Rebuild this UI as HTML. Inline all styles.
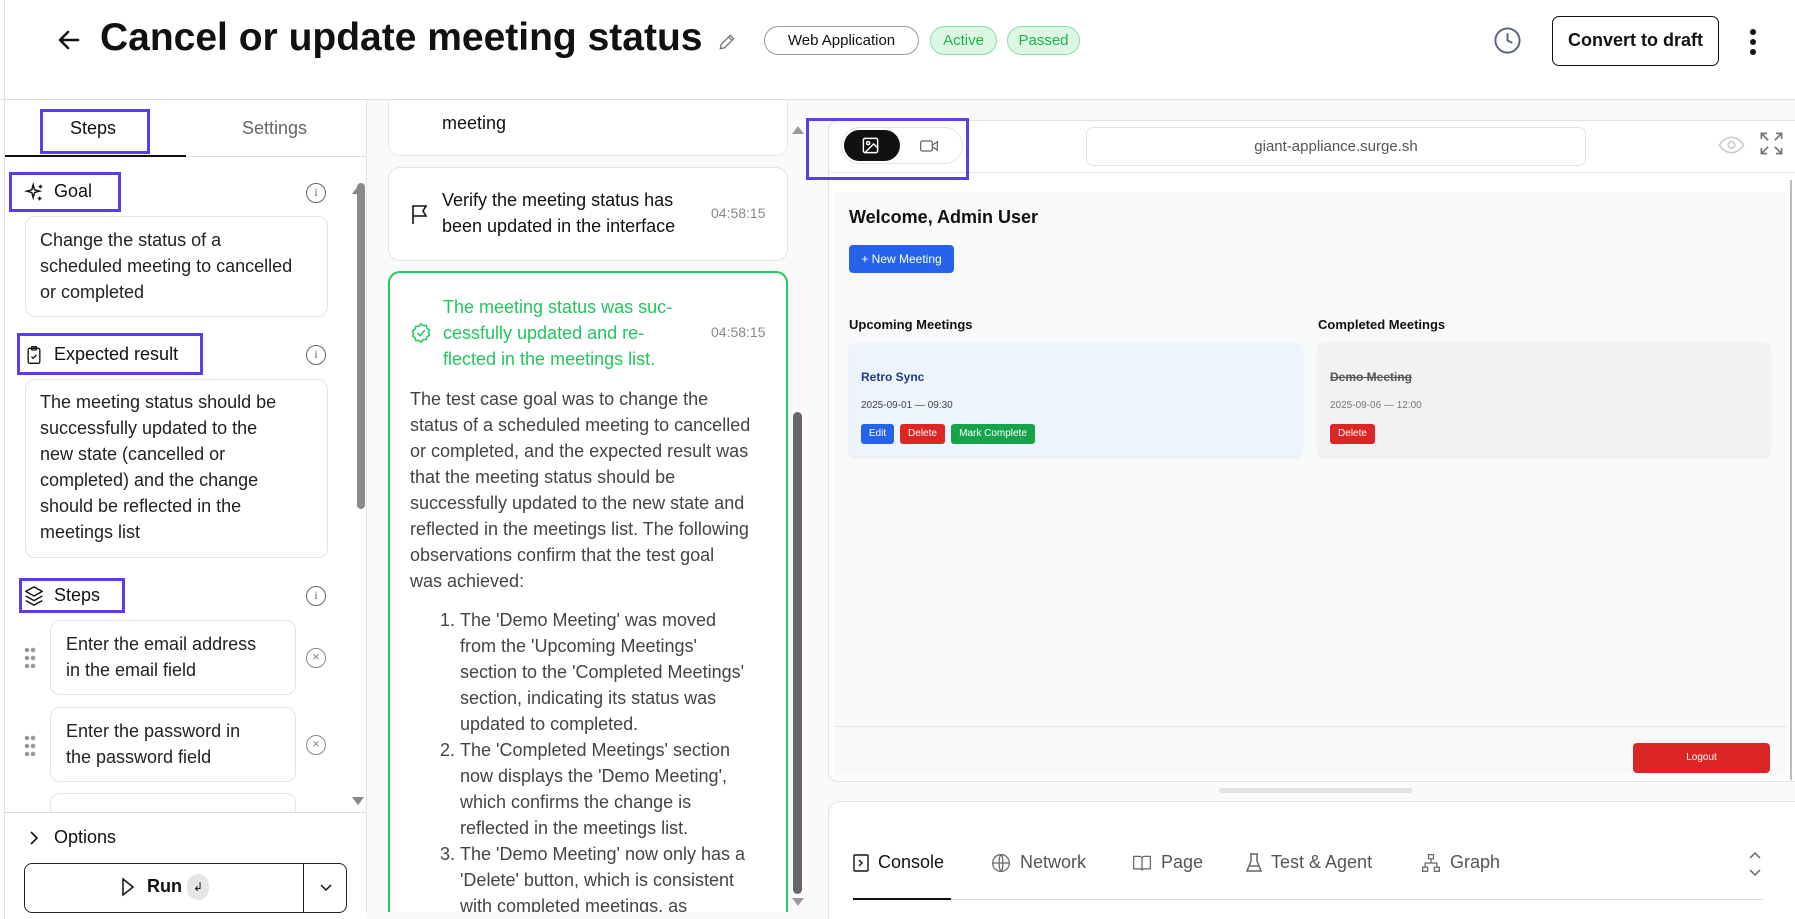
<!DOCTYPE html>
<html><head><meta charset="utf-8"><style>
*{box-sizing:border-box;margin:0;padding:0}
body{width:1795px;height:919px;overflow:hidden;background:#fff;font-family:"Liberation Sans",sans-serif;color:#111;position:relative}
.a{position:absolute}
.hl{position:absolute;border:3px solid #5b3fe6}
.card{position:absolute;background:#fff;border:1px solid #e5e5e5;border-radius:10px}
.t18{font-size:18px;line-height:26px;color:#222}
.chip{position:absolute;height:29px;border-radius:15px;font-size:15px;line-height:27px;text-align:center}
.info{position:absolute;width:20px;height:20px;border:1.5px solid #666;border-radius:50%;font-size:12px;line-height:17px;text-align:center;color:#666;font-family:"Liberation Serif",serif}
.xc{position:absolute;width:20px;height:20px;border:1.5px solid #888;border-radius:50%;font-size:13px;line-height:16px;text-align:center;color:#888}
.dots{position:absolute;width:12px;height:22px;background-image:radial-gradient(circle,#999 2px,transparent 2.5px);background-size:6px 8px}
.btn{position:absolute;color:#fff;font-size:10px;line-height:20px;text-align:center;border-radius:3px}
.tab{position:absolute;top:852px;font-size:18px;color:#555;display:flex;align-items:center;gap:9px}
</style></head><body>
<div class="a" style="left:4px;top:0;width:1px;height:919px;background:#e3e3e3"></div>
<!-- header -->
<svg class="a" style="left:57px;top:28px" width="24" height="24" viewBox="0 0 24 24" fill="none" stroke="#111" stroke-width="2.6" stroke-linecap="round" stroke-linejoin="round"><path d="M21 12H4M11 4l-8 8 8 8"/></svg>
<div class="a" style="left:100px;top:16px;font-size:39px;font-weight:bold;white-space:nowrap">Cancel or update meeting status</div>
<svg class="a" style="left:717px;top:32px" width="20" height="20" viewBox="0 0 24 24" fill="none" stroke="#777" stroke-width="1.6"><path d="M4 20l1-5L16 4l4 4L9 19zM14 6l4 4"/></svg>
<div class="chip" style="left:764px;top:26px;width:155px;border:1.5px solid #999;color:#111">Web Application</div>
<div class="chip" style="left:930px;top:26px;width:67px;border:1px solid #86e0a3;background:#dcf8e5;color:#22b04b">Active</div>
<div class="chip" style="left:1007px;top:26px;width:73px;border:1px solid #86e0a3;background:#dcf8e5;color:#22b04b">Passed</div>
<svg class="a" style="left:1493px;top:26px" width="29" height="29" viewBox="0 0 24 24" fill="none" stroke="#5a6478" stroke-width="1.6"><circle cx="12" cy="12" r="10"/><path d="M12 6v6l4 2"/></svg>
<div class="a" style="left:1552px;top:16px;width:167px;height:50px;border:1.5px solid #111;border-radius:7px;font-size:18px;font-weight:bold;line-height:47px;text-align:center">Convert to draft</div>
<div class="a" style="left:1750px;top:29px;width:6px;height:6px;border-radius:3px;background:#111;box-shadow:0 10px 0 #111,0 20px 0 #111"></div>
<div class="a" style="left:0;top:99px;width:1795px;height:1px;background:#ddd"></div>
<!-- left panel -->
<div class="a" style="left:366px;top:100px;width:1px;height:819px;background:#e5e5e5"></div>
<div class="a" style="left:70px;top:118px;font-size:18px">Steps</div>
<div class="a" style="left:242px;top:118px;font-size:18px;color:#666">Settings</div>
<div class="a" style="left:5px;top:156px;width:361px;height:1px;background:#ddd"></div>
<div class="a" style="left:5px;top:155px;width:181px;height:2px;background:#111"></div>
<div class="hl" style="left:40px;top:109px;width:110px;height:45px"></div>
<div class="a" style="left:357px;top:183px;width:8px;height:326px;background:#8a8a8a;border-radius:4px"></div>
<div class="a" style="left:352px;top:186px;border:6px solid transparent;border-bottom:8px solid #888;border-top:0"></div>
<div class="a" style="left:352px;top:797px;border:6px solid transparent;border-top:8px solid #888;border-bottom:0"></div>
<svg class="a" style="left:24px;top:182px" width="22" height="22" viewBox="0 0 24 24" fill="none" stroke="#111" stroke-width="1.6"><path d="M10 3l1.5 5.5L17 10l-5.5 1.5L10 17l-1.5-5.5L3 10l5.5-1.5zM18 3v4M16 5h4M17 16v4M15 18h4"/></svg>
<div class="a" style="left:54px;top:181px;font-size:18px">Goal</div>
<div class="hl" style="left:9px;top:172px;width:112px;height:40px"></div>
<div class="info" style="left:306px;top:183px">i</div>
<div class="card" style="left:25px;top:216px;width:303px;height:101px"></div>
<div class="a t18" style="left:40px;top:227px">Change the status of a<br>scheduled meeting to cancelled<br>or completed</div>
<svg class="a" style="left:24px;top:344px" width="20" height="22" viewBox="0 0 24 24" fill="none" stroke="#111" stroke-width="1.6"><rect x="5" y="4" width="14" height="18" rx="2"/><rect x="9" y="2" width="6" height="4" rx="1"/><path d="M9 14l2 2 4-4"/></svg>
<div class="a" style="left:54px;top:344px;font-size:18px">Expected result</div>
<div class="hl" style="left:17px;top:333px;width:186px;height:42px"></div>
<div class="info" style="left:306px;top:345px">i</div>
<div class="card" style="left:25px;top:379px;width:303px;height:179px"></div>
<div class="a t18" style="left:40px;top:389px">The meeting status should be<br>successfully updated to the<br>new state (cancelled or<br>completed) and the change<br>should be reflected in the<br>meetings list</div>
<svg class="a" style="left:23px;top:585px" width="22" height="22" viewBox="0 0 24 24" fill="none" stroke="#111" stroke-width="1.6" stroke-linejoin="round"><path d="M12 2l9 5-9 5-9-5zM3 12l9 5 9-5M3 17l9 5 9-5"/></svg>
<div class="a" style="left:54px;top:585px;font-size:18px">Steps</div>
<div class="hl" style="left:19px;top:578px;width:106px;height:35px"></div>
<div class="info" style="left:306px;top:586px">i</div>
<div class="dots" style="left:24px;top:646px"></div>
<div class="card" style="left:50px;top:620px;width:246px;height:75px"></div>
<div class="a t18" style="left:66px;top:631px">Enter the email address<br>in the email field</div>
<div class="xc" style="left:306px;top:648px">×</div>
<div class="dots" style="left:24px;top:734px"></div>
<div class="card" style="left:50px;top:707px;width:246px;height:75px"></div>
<div class="a t18" style="left:66px;top:718px">Enter the password in<br>the password field</div>
<div class="xc" style="left:306px;top:735px">×</div>
<div class="card" style="left:50px;top:793px;width:246px;height:19px;border-bottom:none;border-radius:10px 10px 0 0"></div>
<div class="a" style="left:5px;top:812px;width:361px;height:107px;background:#fff;border-top:1px solid #ddd"></div>
<svg class="a" style="left:28px;top:830px" width="12" height="16" viewBox="0 0 12 16" fill="none" stroke="#111" stroke-width="1.6"><path d="M3 2l6 6-6 6"/></svg>
<div class="a" style="left:54px;top:827px;font-size:18px">Options</div>
<div class="a" style="left:24px;top:863px;width:323px;height:50px;border:1.5px solid #222;border-radius:8px"></div>
<div class="a" style="left:303px;top:864px;width:1px;height:48px;background:#222"></div>
<svg class="a" style="left:319px;top:881px" width="14" height="14" viewBox="0 0 14 14" fill="none" stroke="#111" stroke-width="1.5"><path d="M2 4l5 5 5-5"/></svg>
<svg class="a" style="left:120px;top:877px" width="16" height="20" viewBox="0 0 16 20" fill="none" stroke="#111" stroke-width="1.5"><path d="M3 2l10 8-10 8z"/></svg>
<div class="a" style="left:147px;top:876px;font-size:18px;font-weight:bold">Run</div>
<div class="a" style="left:187px;top:874px;width:22px;height:26px;background:#e6e6e6;border-radius:11px;font-size:12px;text-align:center;line-height:26px">↲</div>
<!-- middle -->
<div class="a" style="left:367px;top:100px;width:461px;height:819px;background:#fafafa;overflow:hidden">
<div class="card" style="left:21px;top:-20px;width:400px;height:76px;border-radius:12px"></div>
<div class="a t18" style="left:75px;top:10px;color:#111">meeting</div>
<div class="card" style="left:21px;top:67px;width:400px;height:94px;border-radius:12px"></div>
<svg class="a" style="left:43px;top:103px" width="20" height="22" viewBox="0 0 20 22" fill="none" stroke="#111" stroke-width="1.6"><path d="M3 21V3h13l-3 5 3 5H3"/></svg>
<div class="a t18" style="left:75px;top:87px;color:#111">Verify the meeting status has<br>been updated in the interface</div>
<div class="a" style="left:344px;top:105px;font-size:14px;color:#888">04:58:15</div>
<div class="a" style="left:21px;top:171px;width:400px;height:700px;border:2px solid #22c55e;border-radius:12px;background:#fff"></div>
<svg class="a" style="left:43px;top:222px" width="22" height="22" viewBox="0 0 24 24" fill="none" stroke="#22c55e" stroke-width="1.6"><path d="M12 2l2.5 2 3.2-.3.8 3.1 2.8 1.7-1.2 3 1.2 3-2.8 1.7-.8 3.1-3.2-.3L12 22l-2.5-2-3.2.3-.8-3.1-2.8-1.7 1.2-3-1.2-3 2.8-1.7.8-3.1 3.2.3z"/><path d="M8 12l3 3 5-6"/></svg>
<div class="a t18" style="left:76px;top:194px;color:#22c55e">The meeting status was suc-<br>cessfully updated and re-<br>flected in the meetings list.</div>
<div class="a" style="left:344px;top:224px;font-size:14px;color:#888">04:58:15</div>
<div class="a t18" style="left:43px;top:286px;color:#444;white-space:nowrap">The test case goal was to change the<br>status of a scheduled meeting to cancelled<br>or completed, and the expected result was<br>that the meeting status should be<br>successfully updated to the new state and<br>reflected in the meetings list. The following<br>observations confirm that the test goal<br>was achieved:</div>
<ol class="a t18" style="left:93px;top:507px;color:#444;white-space:nowrap">
<li>The 'Demo Meeting' was moved<br>from the 'Upcoming Meetings'<br>section to the 'Completed Meetings'<br>section, indicating its status was<br>updated to completed.</li>
<li>The 'Completed Meetings' section<br>now displays the 'Demo Meeting',<br>which confirms the change is<br>reflected in the meetings list.</li>
<li>The 'Demo Meeting' now only has a<br>'Delete' button, which is consistent<br>with completed meetings, as</li></ol>
</div>
<div class="a" style="left:366px;top:912px;width:462px;height:7px;background:#fafafa"></div>
<div class="a" style="left:793px;top:412px;width:9px;height:482px;background:#666;border-radius:5px"></div>
<div class="a" style="left:792px;top:126px;border:6px solid transparent;border-bottom:8px solid #999;border-top:0"></div>
<div class="a" style="left:792px;top:898px;border:6px solid transparent;border-top:8px solid #999;border-bottom:0"></div>
<!-- right -->
<div class="a" style="left:806px;top:100px;width:989px;height:819px;background:#fafafa;overflow:hidden">
<div class="a" style="left:22px;top:20px;width:980px;height:662px;background:#fff;border:1px solid #e3e3e3;border-radius:10px"></div>
<div class="a" style="left:22px;top:72px;width:967px;height:1px;background:#e3e3e3"></div>
<div class="a" style="left:35px;top:27px;width:122px;height:37px;border:1px solid #e5e5e5;border-radius:19px;background:#fff"></div>
<div class="a" style="left:38px;top:30px;width:56px;height:31px;background:#111;border-radius:16px"></div>
<svg class="a" style="left:55px;top:36px" width="19" height="19" viewBox="0 0 24 24" fill="none" stroke="#fff" stroke-width="1.8"><rect x="3" y="3" width="18" height="18" rx="2"/><circle cx="9" cy="9" r="2"/><path d="M21 15l-5-5L5 21"/></svg>
<svg class="a" style="left:113px;top:38px" width="20" height="16" viewBox="0 0 24 18" fill="none" stroke="#666" stroke-width="1.5"><rect x="2" y="3" width="14" height="12" rx="2"/><path d="M16 8l6-4v10l-6-4"/></svg>
<div class="hl" style="left:0;top:18px;width:163px;height:62px"></div>
<div class="a" style="left:280px;top:27px;width:500px;height:39px;border:1px solid #e3e3e3;border-radius:7px;font-size:15px;color:#555;text-align:center;line-height:37px">giant-appliance.surge.sh</div>
<svg class="a" style="left:912px;top:34px" width="27" height="22" viewBox="0 0 24 20" fill="none" stroke="#ccc" stroke-width="1.5"><path d="M1 10s4-7 11-7 11 7 11 7-4 7-11 7S1 10 1 10z"/><circle cx="12" cy="10" r="3"/></svg>
<svg class="a" style="left:952px;top:30px" width="27" height="27" viewBox="0 0 24 24" fill="none" stroke="#777" stroke-width="1.5"><path d="M3 8V3h5M3 3l6 6M21 8V3h-5M21 3l-6 6M3 16v5h5M3 21l6-6M21 16v5h-5M21 21l-6-6"/></svg>
<div class="a" style="left:29px;top:92px;width:952px;height:583px;background:#f8f9fb"></div>
<div class="a" style="left:984px;top:80px;width:2px;height:600px;background:#bbb"></div>
<div class="a" style="left:43px;top:107px;font-size:18px;font-weight:bold;color:#111">Welcome, Admin User</div>
<div class="btn" style="left:43px;top:145px;width:105px;height:28px;line-height:28px;font-size:12px;background:#2563eb;border-radius:4px">+ New Meeting</div>
<div class="a" style="left:43px;top:217px;font-size:13px;font-weight:bold">Upcoming Meetings</div>
<div class="a" style="left:512px;top:217px;font-size:13px;font-weight:bold">Completed Meetings</div>
<div class="a" style="left:43px;top:243px;width:453px;height:113px;background:#eef4fe;border-radius:6px;box-shadow:0 1px 3px rgba(0,0,0,.08)"></div>
<div class="a" style="left:55px;top:270px;font-size:12px;font-weight:bold;color:#1e3a8a">Retro Sync</div>
<div class="a" style="left:55px;top:300px;font-size:10px;color:#444">2025-09-01 — 09:30</div>
<div class="btn" style="left:55px;top:324px;width:33px;background:#2563eb">Edit</div>
<div class="btn" style="left:94px;top:324px;width:45px;background:#dc2626">Delete</div>
<div class="btn" style="left:145px;top:324px;width:84px;background:#16a34a">Mark Complete</div>
<div class="a" style="left:512px;top:243px;width:452px;height:113px;background:#f1f2f4;border-radius:6px;box-shadow:0 1px 3px rgba(0,0,0,.08)"></div>
<div class="a" style="left:524px;top:270px;font-size:12px;font-weight:bold;color:#555;text-decoration:line-through">Demo Meeting</div>
<div class="a" style="left:524px;top:300px;font-size:10px;color:#777">2025-09-06 — 12:00</div>
<div class="btn" style="left:524px;top:324px;width:45px;background:#dc2626">Delete</div>
<div class="a" style="left:29px;top:626px;width:952px;height:1px;background:#e5e5e5"></div>
<div class="btn" style="left:827px;top:643px;width:137px;height:30px;line-height:30px;background:#dc2626;border-radius:4px">Logout</div>
<div class="a" style="left:413px;top:688px;width:193px;height:5px;background:#e3e3e3;border-radius:3px"></div>
<div class="a" style="left:22px;top:701px;width:980px;height:130px;background:#fff;border:1px solid #e3e3e3;border-radius:12px"></div>
</div>
<div class="tab" style="left:853px;color:#111"><svg width="16" height="18" viewBox="0 0 16 18" fill="none" stroke="#111" stroke-width="1.4"><rect x="1" y="1" width="14" height="16" rx="1"/><path d="M6 6l3 3-3 3"/></svg>Console</div>
<div class="tab" style="left:991px"><svg width="20" height="20" viewBox="0 0 24 24" fill="none" stroke="#666" stroke-width="1.5"><circle cx="12" cy="12" r="10"/><path d="M2 12h20M12 2c3 3 3 17 0 20M12 2c-3 3-3 17 0 20"/></svg>Network</div>
<div class="tab" style="left:1132px"><svg width="20" height="18" viewBox="0 0 24 20" fill="none" stroke="#666" stroke-width="1.5"><path d="M2 2h7a3 3 0 013 3v14a2 2 0 00-2-2H2zM22 2h-7a3 3 0 00-3 3v14a2 2 0 012-2h8z"/></svg>Page</div>
<div class="tab" style="left:1246px"><svg width="16" height="20" viewBox="0 0 16 20" fill="none" stroke="#666" stroke-width="1.5"><path d="M5 1v7L1 18h14L11 8V1M4 1h8M3 13h10"/></svg>Test &amp; Agent</div>
<div class="tab" style="left:1421px"><svg width="20" height="20" viewBox="0 0 24 24" fill="none" stroke="#666" stroke-width="1.5"><rect x="9" y="2" width="6" height="5"/><rect x="2" y="17" width="6" height="5"/><rect x="16" y="17" width="6" height="5"/><path d="M12 7v5M5 17v-5h14v5"/></svg>Graph</div>
<svg class="a" style="left:1748px;top:850px" width="14" height="28" viewBox="0 0 14 28" fill="none" stroke="#666" stroke-width="1.5"><path d="M2 8l5-5 5 5M2 20l5 5 5-5"/></svg>
<div class="a" style="left:853px;top:899px;width:910px;height:1px;background:#ddd"></div>
<div class="a" style="left:853px;top:898px;width:98px;height:2px;background:#111"></div>
</body></html>
